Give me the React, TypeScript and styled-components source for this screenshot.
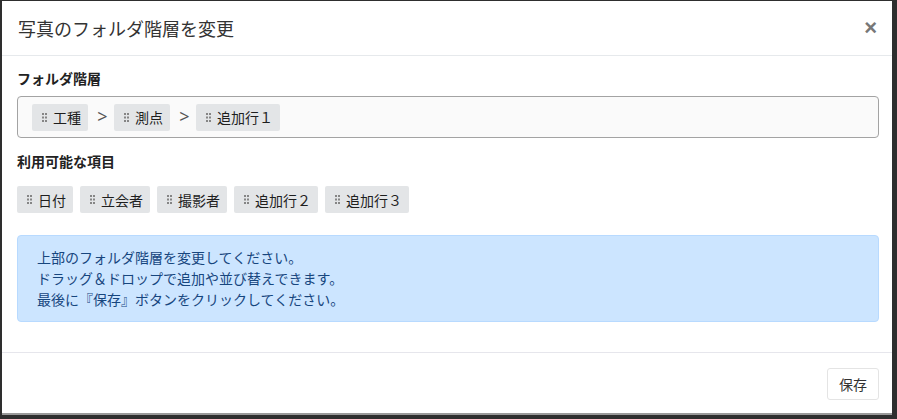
import React from "react";
import styled, { createGlobalStyle } from "styled-components";

const Global = createGlobalStyle`
  html, body { margin: 0; padding: 0; }
  body {
    background: #2e2e2e;
    font-family: "Noto Sans CJK JP", "Noto Sans", sans-serif;
    color: #212529;
  }
`;

const Backdrop = styled.div`
  width: 897px;
  height: 419px;
  padding: 1px 5px 4px 2px;
  box-sizing: border-box;
  background: #2e2e2e;
`;

const Modal = styled.div`
  height: 100%;
  background: #fff;
  display: flex;
  flex-direction: column;
  border-bottom: 2px solid #9a9a9a;
  box-sizing: border-box;
`;

const Header = styled.div`
  height: 54px;
  display: flex;
  align-items: center;
  justify-content: space-between;
  padding: 0 15px 0 16px;
  border-bottom: 1px solid #e6e9ec;
  flex-shrink: 0;
`;

const Title = styled.h5`
  margin: 0;
  font-size: 18px;
  font-weight: 400;
  color: #333;
  line-height: 1;
`;

const Close = styled.button`
  border: 0;
  background: none;
  padding: 0;
  font-family: "Liberation Sans", sans-serif;
  font-size: 22px;
  font-weight: 700;
  color: #777;
  line-height: 1;
  cursor: pointer;
`;

const Body = styled.div`
  flex: 1;
  padding: 12px 13px 0 15px;
  border-bottom: 1px solid #e6e6ec;
`;

const Label = styled.div<{ $top?: number }>`
  font-size: 14px;
  font-weight: 700;
  line-height: 20px;
  color: #222;
  margin-top: ${(p) => p.$top ?? 0}px;
`;

const HierarchyBox = styled.div`
  margin-top: 8px;
  height: 42px;
  box-sizing: border-box;
  border: 1px solid #a3a3a3;
  border-radius: 4px;
  background: #fafafa;
  display: flex;
  align-items: center;
  padding: 0 14px;
`;

const ChipRow = styled.div`
  margin-top: 15px;
  display: flex;
  gap: 7px;
`;

const Chip = styled.div`
  height: 27px;
  display: inline-flex;
  align-items: center;
  gap: 6px;
  padding: 0 7px 0 10px;
  background: #e3e5e7;
  border-radius: 2px;
  font-size: 14px;
  color: #1e1e1e;
  box-sizing: border-box;
`;

const Sep = styled.span`
  width: 26px;
  padding-left: 3px;
  box-sizing: border-box;
  text-align: center;
  font-family: "Noto Sans", sans-serif;
  font-size: 18px;
  color: #555;
  line-height: 1;
  padding-bottom: 2px;
`;

const Alert = styled.div`
  margin-top: 22px;
  background: #cce5ff;
  border: 1px solid #b8daff;
  border-radius: 4px;
  color: #17467e;
  font-size: 14px;
  line-height: 21px;
  padding: 11px 19px 11px;
`;

const Footer = styled.div`
  height: 60px;
  display: flex;
  align-items: center;
  justify-content: flex-end;
  padding: 0 13px 0 15px;
  flex-shrink: 0;
`;

const SaveButton = styled.button`
  width: 52px;
  height: 32px;
  background: #fff;
  border: 1px solid #e4e4e4;
  border-radius: 3px;
  font-family: "Noto Sans CJK JP", sans-serif;
  font-size: 14px;
  color: #333;
  cursor: pointer;
  margin-top: 1px;
`;

const Grip = () => (
  <svg width="5" height="9" viewBox="0 0 5 9">
    {[0, 3.5, 7].map((y) =>
      [0, 3].map((x) => (
        <rect key={`${x}-${y}`} x={x} y={y} width="2" height="2" fill="#858585" />
      ))
    )}
  </svg>
);

const Item = ({ label }: { label: string }) => (
  <Chip>
    <Grip />
    <span>{label}</span>
  </Chip>
);

export default function App() {
  const hierarchy = ["工種", "測点", "追加行１"];
  const available = ["日付", "立会者", "撮影者", "追加行２", "追加行３"];
  return (
    <>
      <Global />
      <Backdrop>
        <Modal>
          <Header>
            <Title>写真のフォルダ階層を変更</Title>
            <Close aria-label="close">×</Close>
          </Header>
          <Body>
            <Label>フォルダ階層</Label>
            <HierarchyBox>
              {hierarchy.map((h, i) => (
                <React.Fragment key={h}>
                  {i > 0 && <Sep>&gt;</Sep>}
                  <Item label={h} />
                </React.Fragment>
              ))}
            </HierarchyBox>
            <Label $top={13}>利用可能な項目</Label>
            <ChipRow>
              {available.map((a) => (
                <Item key={a} label={a} />
              ))}
            </ChipRow>
            <Alert>
              上部のフォルダ階層を変更してください。
              <br />
              ドラッグ＆ドロップで追加や並び替えできます。
              <br />
              最後に『保存』ボタンをクリックしてください。
            </Alert>
          </Body>
          <Footer>
            <SaveButton>保存</SaveButton>
          </Footer>
        </Modal>
      </Backdrop>
    </>
  );
}
